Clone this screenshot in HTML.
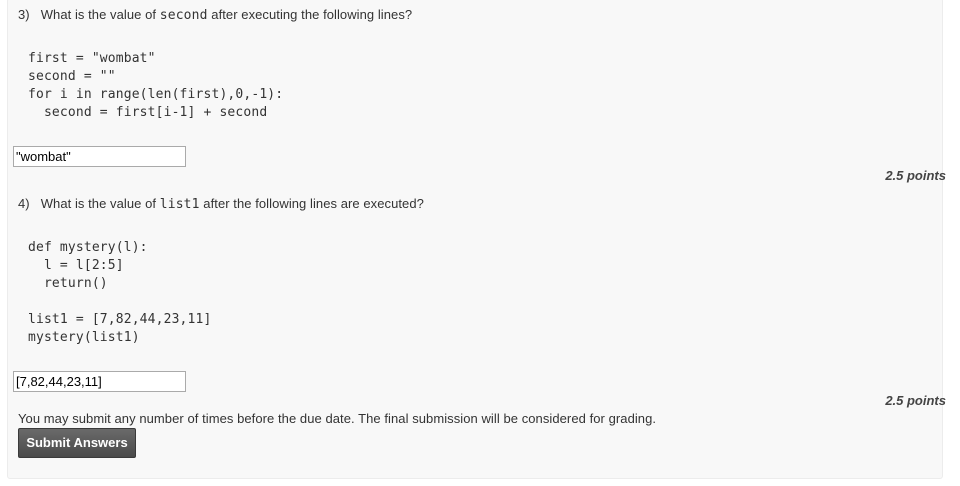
<!DOCTYPE html>
<html><head><style>
body{margin:0;width:960px;height:486px;background:#fff;font-family:"Liberation Sans",sans-serif;color:#333;position:relative;overflow:hidden}
.panel{position:absolute;left:7px;top:-2px;width:934px;height:479px;background:#f8f8f8;border:1px solid #ececec;border-radius:3px}
.t{position:absolute;font-size:13px;white-space:pre;line-height:16px;letter-spacing:0.06px}
.c{position:absolute;font-family:"DejaVu Sans Mono",monospace;font-size:13px;line-height:18px;white-space:pre;color:#333;letter-spacing:0.15px}
.m{font-family:"DejaVu Sans Mono",monospace;letter-spacing:0.15px}
.in{position:absolute;left:13px;background:#fff;border:1px solid #aaa;font-size:13px;line-height:19px;padding-left:2px;box-sizing:border-box;color:#000;width:173px;height:21px}
.p{position:absolute;right:14px;font-size:13px;font-weight:bold;font-style:italic;color:#444}
.btn{position:absolute;left:18px;top:428px;width:118px;height:30px;background:linear-gradient(#6a6a6a,#4a4a4a);border:1px solid #3a3a3a;border-radius:2px;color:#fff;font-weight:bold;font-size:13px;line-height:28px;text-align:center;box-sizing:border-box}
</style></head><body>
<div class="panel"></div>
<div class="t" style="left:18px;top:7px">3)&nbsp;&nbsp; What is the value of <span class="m">second</span> after executing the following lines?</div>
<div class="c" style="left:28px;top:50px">first = "wombat"
second = ""
for i in range(len(first),0,-1):
  second = first[i-1] + second</div>
<div class="in" style="top:146px">"wombat"</div>
<div class="p" style="top:168px">2.5 points</div>
<div class="t" style="left:18px;top:196px">4)&nbsp;&nbsp; What is the value of <span class="m">list1</span> after the following lines are executed?</div>
<div class="c" style="left:28px;top:239px">def mystery(l):
  l = l[2:5]
  return()

list1 = [7,82,44,23,11]
mystery(list1)</div>
<div class="in" style="top:371px">[7,82,44,23,11]</div>
<div class="p" style="top:393px">2.5 points</div>
<div class="t" style="left:18px;top:411px">You may submit any number of times before the due date. The final submission will be considered for grading.</div>
<div class="btn">Submit Answers</div>
</body></html>
